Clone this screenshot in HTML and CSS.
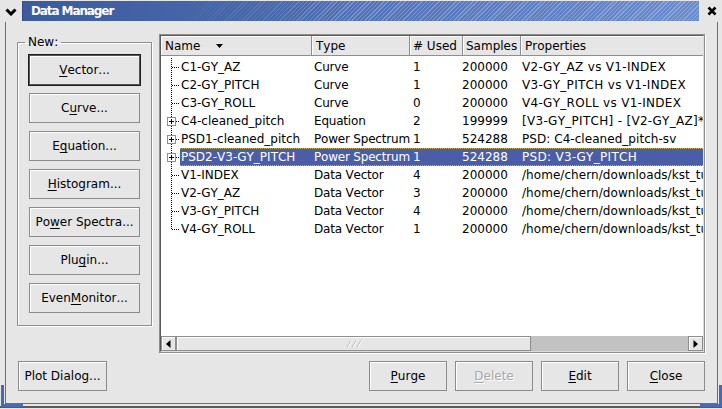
FILE: index.html
```html
<!DOCTYPE html>
<html>
<head>
<meta charset="utf-8">
<title>Data Manager</title>
<link rel="stylesheet" href="styles.css">
</head>
<body>
<div class="window">
  <div class="titlebar">
    <div class="tb-btn tb-menu">
      <svg width="12" height="8" viewBox="0 0 12 8"><polyline points="1.5,1.5 6,6 10.5,1.5" fill="none" stroke="#000" stroke-width="3"/></svg>
    </div>
    <div class="tb-title">Data Manager</div>
    <div class="tb-btn tb-close">
      <svg width="10" height="10" viewBox="0 0 10 10"><path d="M1.5 1.5 L8.5 8.5 M8.5 1.5 L1.5 8.5" stroke="#000" stroke-width="2.6" fill="none"/></svg>
    </div>
  </div>

  <div class="frame">
    <div class="main">
      <fieldset class="group">
        <legend>New:</legend>
        <div class="btn-col">
          <button class="btn btn-default"><u>V</u>ector...</button>
          <button class="btn">C<u>u</u>rve...</button>
          <button class="btn">E<u>q</u>uation...</button>
          <button class="btn"><u>H</u>istogram...</button>
          <button class="btn">Po<u>w</u>er Spectra...</button>
          <button class="btn">Plu<u>g</u>in...</button>
          <button class="btn">Even<u>M</u>onitor...</button>
        </div>
      </fieldset>

      <div class="tree">
        <div class="tree-inner">
          <div class="viewport">
            <div class="header">
              <div class="hcell h-name">Name<svg class="sort" width="7" height="4" viewBox="0 0 7 4"><polygon points="0,0 7,0 3.5,4" fill="#000"/></svg></div>
              <div class="hcell h-type">Type</div>
              <div class="hcell h-used"># Used</div>
              <div class="hcell h-samples">Samples</div>
              <div class="hcell h-props">Properties</div>
            </div>
            <div class="rows">
              <div class="row">
                <svg class="twig" width="19" height="18" viewBox="0 0 19 18"><path d="M10.5 0 V18 M11 9.5 H19" stroke="#000" stroke-dasharray="1 1" fill="none"/></svg>
                <div class="cells"><span class="cell c-name">C1-GY_AZ</span><span class="cell c-type">Curve</span><span class="cell c-used">1</span><span class="cell c-samples">200000</span><span class="cell c-props caps">V2-GY_AZ vs V1-INDEX</span></div>
              </div>
              <div class="row">
                <svg class="twig" width="19" height="18" viewBox="0 0 19 18"><path d="M10.5 0 V18 M11 9.5 H19" stroke="#000" stroke-dasharray="1 1" fill="none"/></svg>
                <div class="cells"><span class="cell c-name">C2-GY_PITCH</span><span class="cell c-type">Curve</span><span class="cell c-used">1</span><span class="cell c-samples">200000</span><span class="cell c-props caps">V3-GY_PITCH vs V1-INDEX</span></div>
              </div>
              <div class="row">
                <svg class="twig" width="19" height="18" viewBox="0 0 19 18"><path d="M10.5 0 V18 M11 9.5 H19" stroke="#000" stroke-dasharray="1 1" fill="none"/></svg>
                <div class="cells"><span class="cell c-name">C3-GY_ROLL</span><span class="cell c-type">Curve</span><span class="cell c-used">0</span><span class="cell c-samples">200000</span><span class="cell c-props caps">V4-GY_ROLL vs V1-INDEX</span></div>
              </div>
              <div class="row">
                <svg class="twig" width="19" height="18" viewBox="0 0 19 18"><path d="M10.5 0 V5 M10.5 14 V18 M15 9.5 H19" stroke="#000" stroke-dasharray="1 1" fill="none"/><rect x="6.5" y="5.5" width="8" height="8" fill="#fff" stroke="#8e8e8e"/><path d="M8 9.5 H13 M10.5 7 V12" stroke="#000" fill="none"/></svg>
                <div class="cells"><span class="cell c-name">C4-cleaned_pitch</span><span class="cell c-type">Equation</span><span class="cell c-used">2</span><span class="cell c-samples">199999</span><span class="cell c-props caps">[V3-GY_PITCH] - [V2-GY_AZ]*0.35</span></div>
              </div>
              <div class="row">
                <svg class="twig" width="19" height="18" viewBox="0 0 19 18"><path d="M10.5 0 V5 M10.5 14 V18 M15 9.5 H19" stroke="#000" stroke-dasharray="1 1" fill="none"/><rect x="6.5" y="5.5" width="8" height="8" fill="#fff" stroke="#8e8e8e"/><path d="M8 9.5 H13 M10.5 7 V12" stroke="#000" fill="none"/></svg>
                <div class="cells"><span class="cell c-name">PSD1-cleaned_pitch</span><span class="cell c-type">Power Spectrum</span><span class="cell c-used">1</span><span class="cell c-samples">524288</span><span class="cell c-props">PSD: C4-cleaned_pitch-sv</span></div>
              </div>
              <div class="row sel">
                <svg class="twig" width="19" height="18" viewBox="0 0 19 18"><path d="M10.5 0 V5 M10.5 14 V18 M15 9.5 H19" stroke="#000" stroke-dasharray="1 1" fill="none"/><rect x="6.5" y="5.5" width="8" height="8" fill="#fff" stroke="#8e8e8e"/><path d="M8 9.5 H13 M10.5 7 V12" stroke="#000" fill="none"/></svg>
                <div class="cells"><span class="cell c-name">PSD2-V3-GY_PITCH</span><span class="cell c-type">Power Spectrum</span><span class="cell c-used">1</span><span class="cell c-samples">524288</span><span class="cell c-props caps">PSD: V3-GY_PITCH</span></div>
              </div>
              <div class="row">
                <svg class="twig" width="19" height="18" viewBox="0 0 19 18"><path d="M10.5 0 V18 M11 9.5 H19" stroke="#000" stroke-dasharray="1 1" fill="none"/></svg>
                <div class="cells"><span class="cell c-name">V1-INDEX</span><span class="cell c-type">Data Vector</span><span class="cell c-used">4</span><span class="cell c-samples">200000</span><span class="cell c-props">/home/chern/downloads/kst_tutorial/gyrodata.dat</span></div>
              </div>
              <div class="row">
                <svg class="twig" width="19" height="18" viewBox="0 0 19 18"><path d="M10.5 0 V18 M11 9.5 H19" stroke="#000" stroke-dasharray="1 1" fill="none"/></svg>
                <div class="cells"><span class="cell c-name">V2-GY_AZ</span><span class="cell c-type">Data Vector</span><span class="cell c-used">3</span><span class="cell c-samples">200000</span><span class="cell c-props">/home/chern/downloads/kst_tutorial/gyrodata.dat</span></div>
              </div>
              <div class="row">
                <svg class="twig" width="19" height="18" viewBox="0 0 19 18"><path d="M10.5 0 V18 M11 9.5 H19" stroke="#000" stroke-dasharray="1 1" fill="none"/></svg>
                <div class="cells"><span class="cell c-name">V3-GY_PITCH</span><span class="cell c-type">Data Vector</span><span class="cell c-used">4</span><span class="cell c-samples">200000</span><span class="cell c-props">/home/chern/downloads/kst_tutorial/gyrodata.dat</span></div>
              </div>
              <div class="row">
                <svg class="twig" width="19" height="18" viewBox="0 0 19 18"><path d="M10.5 0 V10 M11 9.5 H19" stroke="#000" stroke-dasharray="1 1" fill="none"/></svg>
                <div class="cells"><span class="cell c-name">V4-GY_ROLL</span><span class="cell c-type">Data Vector</span><span class="cell c-used">1</span><span class="cell c-samples">200000</span><span class="cell c-props">/home/chern/downloads/kst_tutorial/gyrodata.dat</span></div>
              </div>
            </div>
          </div>
          <div class="hscroll">
            <div class="sb-btn"><svg width="5" height="8" viewBox="0 0 5 8"><polygon points="4.5,0 0,4 4.5,8" fill="#000"/></svg></div>
            <div class="sb-thumb"><svg width="16" height="8" viewBox="0 0 16 8"><path d="M1 7.5 L5 0.5 M6 7.5 L10 0.5 M11 7.5 L15 0.5" stroke="#b4b4b4" fill="none"/><path d="M2 7.5 L6 0.5 M7 7.5 L11 0.5 M12 7.5 L16 0.5" stroke="#fff" fill="none"/></svg></div>
            <div class="sb-track"></div>
            <div class="sb-btn"><svg width="5" height="8" viewBox="0 0 5 8"><polygon points="0.5,0 5,4 0.5,8" fill="#000"/></svg></div>
          </div>
        </div>
      </div>
    </div>

    <div class="bottom">
      <button class="btn btn-plot">Plot Dialog...</button>
      <button class="btn btn-act"><u>P</u>urge</button>
      <button class="btn btn-act btn-disabled"><u>D</u>elete</button>
      <button class="btn btn-act"><u>E</u>dit</button>
      <button class="btn btn-act"><u>C</u>lose</button>
    </div>
  </div>

  <div class="corner corner-bl"></div>
  <div class="corner corner-br"></div>
</div>
</body>
</html>
```

FILE: styles.css
```css
* {
  box-sizing: border-box;
}

html, body {
  margin: 0;
  padding: 0;
}

body {
  width: 722px;
  height: 409px;
  overflow: hidden;
  background: #e6e6e6;
  font-family: "DejaVu Sans", "Bitstream Vera Sans", sans-serif;
  font-size: 12px;
  font-kerning: none;
  color: #000;
}

.window {
  position: relative;
  width: 722px;
  height: 409px;
  display: flex;
  flex-direction: column;
  background: #e6e6e6;
  box-shadow: inset 0 -1px 0 #e6e6e6, inset 0 -3px 0 #5a5a5a;
}

/* ---------- title bar ---------- */
.titlebar {
  flex: none;
  height: 22px;
  display: flex;
}

.tb-btn {
  flex: none;
  width: 22px;
  height: 22px;
  display: flex;
  align-items: center;
  justify-content: center;
  background: #e6e6e6;
}

.tb-menu {
  padding-top: 1px;
}

.tb-close {
  width: 23px;
  padding-left: 2px;
}

.tb-title {
  flex: 1;
  height: 20px;
  margin-top: 1px;
  padding-left: 8px;
  color: #fff;
  font-weight: bold;
  font-size: 12px;
  letter-spacing: -1.1px;
  line-height: 20px;
  border-left: 1px solid #2f4a86;
  background:
    linear-gradient(to right, #3c5b9d 0%, #4464a7 22%, rgba(74, 106, 172, 0) 48%),
    repeating-linear-gradient(135deg, rgba(255, 255, 255, 0.24) 0 1px, rgba(255, 255, 255, 0) 1px 3px),
    linear-gradient(to right, #3c5b9d, #5475bb 55%, #6b8dcf);
}

/* ---------- frame ---------- */
.frame {
  flex: 1;
  display: flex;
  flex-direction: column;
  margin: 0 4px 5px 5px;
  border: 1px solid #6e6e6e;
  border-top: none;
}

.main {
  display: flex;
  gap: 7px;
  padding: 12px 12px 0 11px;
}

/* ---------- New: group ---------- */
.group {
  flex: none;
  align-self: flex-start;
  width: 135px;
  margin: 1px 0 0 0;
  padding: 0;
  min-width: 0;
  border: 1px solid #8e8e8e;
  box-shadow: inset 1px 1px 0 #fff, 1px 1px 0 #fff;
}

.group legend {
  margin-left: 7px;
  padding: 0 3px;
  line-height: 14px;
  font-size: 12px;
}

.btn-col {
  display: flex;
  flex-direction: column;
  gap: 8px;
  padding: 6px 11px 12px 11px;
}

/* ---------- buttons ---------- */
.btn {
  font-family: "DejaVu Sans", "Bitstream Vera Sans", sans-serif;
  font-size: 12px;
  font-kerning: none;
  color: #000;
  height: 30px;
  padding: 0;
  margin: 0;
  background: #e6e6e6;
  border: 1px solid #8b8b8b;
  box-shadow: inset 1px 1px 0 #fff;
  border-radius: 0;
  white-space: nowrap;
}

.btn-col .btn {
  width: 111px;
}

.btn-default {
  border-color: #555;
  box-shadow: 0 0 0 1px #1e1e1e, inset 1px 1px 0 #fff;
}

.btn u {
  text-decoration-thickness: 1px;
  text-underline-offset: 2px;
}

.btn-disabled {
  color: #a8a8a8;
  text-shadow: 1px 1px 0 #fff;
}

/* ---------- tree view ---------- */
.tree {
  flex: none;
  width: 546px;
  height: 319px;
  border: 1px solid #8e8e8e;
  box-shadow: 1px 1px 0 #fff;
}

.tree-inner {
  height: 100%;
  display: flex;
  flex-direction: column;
  background: #fff;
  border: 1px solid;
  border-color: #5a5a5a #dcdcdc #dcdcdc #5a5a5a;
}

.viewport {
  flex: 1;
  overflow: hidden;
}

.header {
  display: flex;
  height: 20px;
  background: #e6e6e6;
  width: 800px;
}

.hcell {
  flex: none;
  display: flex;
  align-items: center;
  height: 20px;
  padding-left: 4px;
  border-right: 1px solid #8e8e8e;
  border-bottom: 1px solid #8e8e8e;
  box-shadow: inset 1px 1px 0 #fff;
  white-space: nowrap;
  overflow: hidden;
}

.h-name { width: 151px; }
.h-type { width: 98px; }
.h-used { width: 53px; padding-left: 3px; }
.h-samples { width: 58px; padding-left: 3px; }
.h-props { width: 300px; }

.sort {
  margin-left: 16px;
  margin-top: 1px;
}

.rows {
  padding-top: 2px;
}

.row {
  display: flex;
  height: 18px;
  line-height: 18px;
  white-space: nowrap;
}

.twig {
  flex: none;
  display: block;
}

.cells {
  flex: none;
  display: flex;
}

.cell {
  flex: none;
  overflow: hidden;
  padding-left: 3px;
}

.c-name { width: 131px; padding-left: 1px; }
.c-type { width: 98px; overflow: visible; letter-spacing: -0.2px; }
.c-used { width: 50px; padding-left: 4px; }
.c-samples { width: 60px; }
.c-props { width: 320px; letter-spacing: 0.05px; }
.c-props.caps { letter-spacing: 0.3px; }

.row.sel .cells {
  background: #4c5da7;
  color: #fff;
  line-height: 16px;
  border-top: 1px dotted #c9b35a;
  border-bottom: 1px dotted #c9b35a;
}

/* ---------- horizontal scrollbar ---------- */
.hscroll {
  flex: none;
  height: 15px;
  display: flex;
  background: #c2c2c2;
}

.sb-btn {
  flex: none;
  width: 15px;
  height: 15px;
  display: flex;
  align-items: center;
  justify-content: center;
  background: #e6e6e6;
  border: 1px solid #8e8e8e;
  box-shadow: inset 1px 1px 0 #fff;
}

.sb-thumb {
  flex: none;
  width: 355px;
  height: 15px;
  display: flex;
  align-items: center;
  justify-content: center;
  background: #e6e6e6;
  border: 1px solid #8e8e8e;
  box-shadow: inset 1px 1px 0 #fff;
}

.sb-track {
  flex: 1;
}

/* ---------- bottom buttons ---------- */
.bottom {
  display: flex;
  gap: 8px;
  margin-top: 8px;
  padding: 0 12px;
}

.btn-plot {
  width: 89px;
  margin-right: auto;
}

.btn-act {
  width: 78px;
}

/* ---------- frame corner marks ---------- */
.corner {
  position: absolute;
  bottom: 2px;
  width: 22px;
  height: 22px;
  border-bottom: 3px solid #4a6ab0;
}

.corner-bl {
  left: 1px;
  border-left: 3px solid #4a6ab0;
}

.corner-br {
  right: 0;
  border-right: 3px solid #4a6ab0;
}
```
